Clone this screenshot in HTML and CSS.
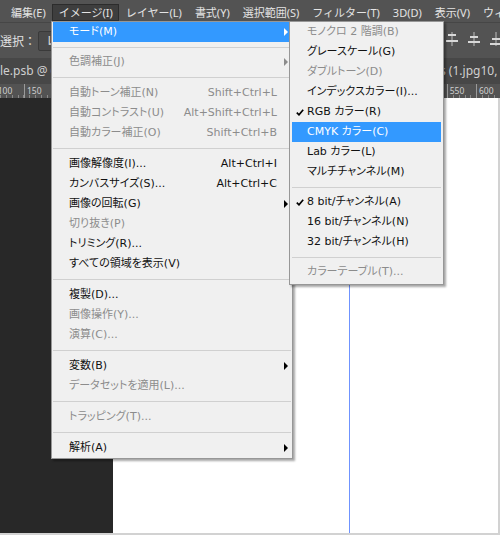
FILE: index.html
```html
<!DOCTYPE html>
<html lang="ja">
<head>
<meta charset="utf-8">
<title>イメージ メニュー</title>
<link rel="stylesheet" href="styles.css">
</head>
<body>
<div class="app">
  <div class="menubar">
    <span class="mi">編集(E)</span>
    <span class="mi open">イメージ(I)</span>
    <span class="mi">レイヤー(L)</span>
    <span class="mi">書式(Y)</span>
    <span class="mi">選択範囲(S)</span>
    <span class="mi">フィルター(T)</span>
    <span class="mi">3D(D)</span>
    <span class="mi">表示(V)</span>
    <span class="mi">ウィンドウ(W)</span>
  </div>
  <div class="options">
    <span class="opt-label">選択：</span>
    <span class="opt-box">レイヤー</span>
    <div class="align-icons">
      <svg class="aicon" width="12" height="14" viewBox="0 0 12 14"><rect x="5.5" y="0" width="1" height="14" fill="#bdbdbd"/><rect x="2" y="2" width="8" height="2" fill="#d8d8d8"/><rect x="0" y="8" width="12" height="2" fill="#d8d8d8"/></svg>
      <svg class="aicon" width="12" height="14" viewBox="0 0 12 14"><rect x="5.5" y="0" width="1" height="14" fill="#bdbdbd"/><rect x="2" y="4" width="8" height="2" fill="#d8d8d8"/><rect x="0" y="9" width="12" height="2" fill="#d8d8d8"/></svg>
      <svg class="aicon" width="12" height="14" viewBox="0 0 12 14"><rect x="5.5" y="0" width="1" height="14" fill="#bdbdbd"/><rect x="2" y="6" width="8" height="2" fill="#d8d8d8"/><rect x="0" y="11" width="12" height="2" fill="#d8d8d8"/></svg>
    </div>
  </div>
  <div class="tabs">
    <div class="tab-left">le.psb @ 66.7% (RGB/8)</div>
    <div class="tab-right">s (1.jpg10, RGB/8)</div>
  </div>
  <div class="ruler">
    <div class="ruler-left">
      <span class="rt">100</span><span class="rt">150</span><span class="rt">200</span><span class="rt">250</span>
    </div>
    <div class="ruler-right">
      <span class="rt">0</span><span class="rt">50</span><span class="rt">100</span><span class="rt">150</span><span class="rt">200</span><span class="rt">250</span><span class="rt">300</span><span class="rt">350</span><span class="rt">400</span><span class="rt">450</span><span class="rt">500</span><span class="rt">550</span><span class="rt">600</span>
    </div>
  </div>
  <div class="workspace">
    <div class="pasteboard"></div>
    <div class="canvas"><div class="guide"></div></div>
  </div>

  <div class="menu main-menu">
    <div class="item active"><span>モード(M)</span><span></span><i class="arrow"></i></div>
    <div class="sep first"></div>
    <div class="item disabled"><span>色調補正(J)</span><span></span><i class="arrow"></i></div>
    <div class="sep"></div>
    <div class="item disabled"><span>自動トーン補正(N)</span><span class="key">Shift+Ctrl+L</span><span></span></div>
    <div class="item disabled"><span>自動コントラスト(U)</span><span class="key">Alt+Shift+Ctrl+L</span><span></span></div>
    <div class="item disabled"><span>自動カラー補正(O)</span><span class="key">Shift+Ctrl+B</span><span></span></div>
    <div class="sep"></div>
    <div class="item"><span>画像解像度(I)...</span><span class="key">Alt+Ctrl+I</span><span></span></div>
    <div class="item"><span>カンバスサイズ(S)...</span><span class="key">Alt+Ctrl+C</span><span></span></div>
    <div class="item"><span>画像の回転(G)</span><span></span><i class="arrow"></i></div>
    <div class="item disabled"><span>切り抜き(P)</span><span></span><span></span></div>
    <div class="item"><span>トリミング(R)...</span><span></span><span></span></div>
    <div class="item"><span>すべての領域を表示(V)</span><span></span><span></span></div>
    <div class="sep"></div>
    <div class="item"><span>複製(D)...</span><span></span><span></span></div>
    <div class="item disabled"><span>画像操作(Y)...</span><span></span><span></span></div>
    <div class="item disabled"><span>演算(C)...</span><span></span><span></span></div>
    <div class="sep"></div>
    <div class="item"><span>変数(B)</span><span></span><i class="arrow"></i></div>
    <div class="item disabled"><span>データセットを適用(L)...</span><span></span><span></span></div>
    <div class="sep"></div>
    <div class="item disabled"><span>トラッピング(T)...</span><span></span><span></span></div>
    <div class="sep"></div>
    <div class="item"><span>解析(A)</span><span></span><i class="arrow"></i></div>
  </div>

  <div class="menu sub-menu">
    <div class="sitem disabled">モノクロ 2 階調(B)</div>
    <div class="sitem">グレースケール(G)</div>
    <div class="sitem disabled">ダブルトーン(D)</div>
    <div class="sitem">インデックスカラー(I)...</div>
    <div class="sitem checked"><svg class="check" width="8" height="7" viewBox="0 0 8 7"><path d="M0.8 3.6 L3 5.8 L7.2 0.8" fill="none" stroke="#000" stroke-width="1.7"/></svg>RGB カラー(R)</div>
    <div class="sitem active">CMYK カラー(C)</div>
    <div class="sitem">Lab カラー(L)</div>
    <div class="sitem">マルチチャンネル(M)</div>
    <div class="sep"></div>
    <div class="sitem checked"><svg class="check" width="8" height="7" viewBox="0 0 8 7"><path d="M0.8 3.6 L3 5.8 L7.2 0.8" fill="none" stroke="#000" stroke-width="1.7"/></svg>8 bit/チャンネル(A)</div>
    <div class="sitem">16 bit/チャンネル(N)</div>
    <div class="sitem">32 bit/チャンネル(H)</div>
    <div class="sep"></div>
    <div class="sitem disabled">カラーテーブル(T)...</div>
  </div>
</div>
</body>
</html>
```

FILE: styles.css
```css
* { box-sizing: border-box; }
html, body { margin: 0; padding: 0; }
body {
  width: 500px;
  height: 535px;
  overflow: hidden;
  background: #282828;
  font-family: "Noto Sans", "Noto Sans CJK JP", sans-serif;
}
.app {
  position: relative;
  width: 500px;
  height: 535px;
  display: flex;
  flex-direction: column;
}

/* menu bar */
.menubar {
  height: 22px;
  flex: 0 0 22px;
  background: #535353;
  display: flex;
  align-items: center;
  padding-left: 4.5px;
  font-size: 11px;
  color: #e4e4e4;
  white-space: nowrap;
  overflow: hidden;
}
.menubar .mi {
  padding: 0 5.5px;
  height: 17px;
  line-height: 15px;
  border: 1px solid transparent;
  margin-top: 2px;
}
.menubar .mi.open {
  background: #3e3e3e;
  border-color: #2c2c2c;
}

/* options bar */
.options {
  height: 36px;
  flex: 0 0 36px;
  background: #535353;
  border-top: 1px solid #464646;
  display: flex;
  align-items: center;
  font-size: 12px;
  color: #e0e0e0;
  white-space: nowrap;
  overflow: hidden;
}
.opt-label { width: 38px; }
.opt-box {
  height: 20px;
  line-height: 18px;
  padding: 0 7px;
  width: 90px;
  background: #4a4a4a;
  border: 1px solid #3a3a3a;
  border-radius: 2px;
}
.align-icons {
  margin-left: auto;
  margin-top: -4px;
  display: flex;
  gap: 10px;
  margin-right: -2px;
}
.aicon { display: block; }

/* document tabs */
.tabs {
  height: 26px;
  flex: 0 0 26px;
  background: #474747;
  display: flex;
  font-size: 12px;
  color: #cfcfcf;
  line-height: 26px;
  white-space: nowrap;
  overflow: hidden;
}
.tab-left { width: 113px; overflow: hidden; }
.tab-right { flex: 1; padding-left: 327px; overflow: hidden; }

/* rulers */
.ruler {
  height: 14px;
  flex: 0 0 14px;
  background: #535353;
  display: flex;
  font-size: 8.5px;
  color: #cfcfcf;
  line-height: 14px;
  white-space: nowrap;
  overflow: hidden;
}
.ruler-left, .ruler-right {
  display: flex;
  overflow: hidden;
  background-image: repeating-linear-gradient(to right, #8a8a8a 0, #8a8a8a 1px, transparent 1px, transparent 5.86px);
  background-size: 100% 3px;
  background-repeat: no-repeat;
  background-position: 0 100%;
}
.ruler-left { width: 113px; }
.ruler-left .rt:first-child { margin-left: -5.3px; }
.ruler-right { flex: 1; padding-left: 11.4px; }
.rt {
  flex: 0 0 29.3px;
  border-left: 1px solid #9a9a9a;
  padding-left: 2px;
}

/* workspace */
.workspace {
  flex: 1;
  display: flex;
  border-right: 2px solid #d2d2d2;
  border-bottom: 2px solid #d2d2d2;
}
.pasteboard { width: 113px; background: #282828; }
.canvas { flex: 1; background: #ffffff; position: relative; }
.guide {
  position: absolute;
  left: 236px;
  top: 0;
  bottom: 0;
  width: 1px;
  background: #6f93ff;
}

/* menus */
.menu {
  position: absolute;
  top: 21px;
  background: #f0f0f0;
  border: 1px solid #979797;
  box-shadow: 2px 2px 2px rgba(0, 0, 0, 0.35);
  font-family: "DejaVu Sans", "Noto Sans CJK JP", sans-serif;
  font-size: 11px;
  font-feature-settings: "palt" 1;
  color: #111;
  white-space: nowrap;
}
.main-menu {
  left: 51px;
  width: 242px;
  padding: 0 1px;
  z-index: 2;
}
.sub-menu {
  left: 289px;
  width: 155px;
  padding: 0 2px 2px;
  z-index: 3;
}
.item {
  display: grid;
  grid-template-columns: 1fr auto 14px;
  height: 20px;
  line-height: 20px;
  padding-left: 16px;
}
.sitem {
  position: relative;
  height: 20px;
  line-height: 20px;
  padding-left: 15px;
}
.item.active, .sitem.active { background: #3399ff; color: #fff; }
.item.disabled, .sitem.disabled { color: #8c8c8c; }
.arrow {
  align-self: center;
  margin-left: 7px;
  width: 0;
  height: 0;
  border-left: 4px solid #000;
  border-top: 4px solid transparent;
  border-bottom: 4px solid transparent;
}
.item.active .arrow { border-left-color: #fff; }
.item.disabled .arrow { border-left-color: #8c8c8c; }
.check {
  position: absolute;
  left: 4px;
  top: 7px;
}
.sep {
  height: 11px;
  padding-top: 5px;
}
.sep::before {
  content: "";
  display: block;
  height: 1px;
  background: #d0d0d0;
}
.sub-menu .sep { height: 10px; padding-top: 5px; }
.main-menu .sep.first { height: 10px; }
```
